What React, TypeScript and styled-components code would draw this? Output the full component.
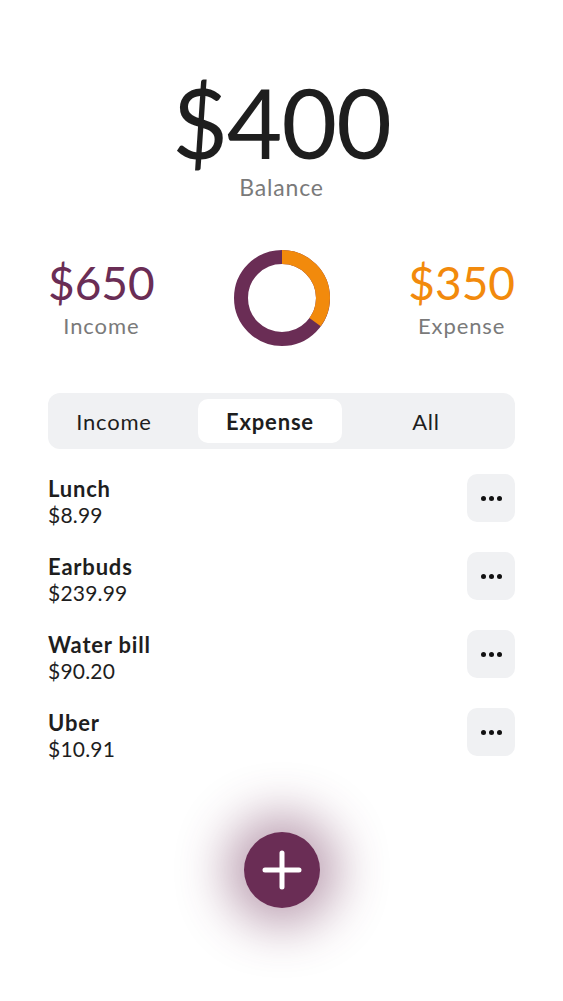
import React from "react";
import styled, { createGlobalStyle } from "styled-components";

const PURPLE = "#6a2d55";
const ORANGE = "#f28a0c";
const GRAY = "#7a7a7a";
const DARK = "#1e1e1e";
const LIGHT = "#f0f1f3";

const Global = createGlobalStyle`
  html, body { margin: 0; padding: 0; background: #fff; }
  body { font-family: Lato, "Open Sans", sans-serif; color: ${DARK}; }
  * { box-sizing: border-box; }
`;

const Page = styled.div`
  width: 563px;
  min-height: 1001px;
  padding: 74px 48px 0;
  display: flex;
  flex-direction: column;
`;

const BalanceBlock = styled.div`
  display: flex;
  flex-direction: column;
  align-items: center;
`;

const BigAmount = styled.div`
  font-size: 96px;
  line-height: 96px;
  font-weight: 400;
  color: ${DARK};
  letter-spacing: -1px;
`;

const Caption = styled.div`
  margin-top: 4px;
  font-size: 23px;
  line-height: 26px;
  color: ${GRAY};
  letter-spacing: 0.8px;
`;

const SummaryRow = styled.div`
  margin-top: 49px;
  display: grid;
  grid-template-columns: 1fr auto 1fr;
  align-items: center;
`;

const Stat = styled.div<{ $align: "start" | "end" }>`
  display: flex;
  flex-direction: column;
  align-items: center;
  justify-self: ${(p) => p.$align};
`;

const StatAmount = styled.div<{ $color: string }>`
  font-size: 46px;
  line-height: 52px;
  color: ${(p) => p.$color};
`;

const StatLabel = styled.div`
  font-size: 22px;
  line-height: 26px;
  color: ${GRAY};
  margin-top: 4px;
  letter-spacing: 0.9px;
`;

const Tabs = styled.div`
  margin-top: 46px;
  height: 56px;
  background: ${LIGHT};
  border-radius: 12px;
  padding: 6px;
  display: grid;
  grid-template-columns: 120px 144px 120px;
  column-gap: 24px;
`;

const Tab = styled.div<{ $active?: boolean }>`
  display: flex;
  align-items: center;
  justify-content: center;
  border-radius: 10px;
  font-size: 22px;
  font-weight: ${(p) => (p.$active ? 700 : 400)};
  background: ${(p) => (p.$active ? "#fff" : "transparent")};
  color: ${DARK};
  letter-spacing: 0.8px;
`;

const List = styled.div`
  margin-top: 25px;
  display: flex;
  flex-direction: column;
  gap: 30px;
`;

const Item = styled.div`
  display: flex;
  align-items: center;
  justify-content: space-between;
  height: 48px;
`;

const ItemText = styled.div`
  display: flex;
  flex-direction: column;
  margin-top: 6px;
`;

const ItemName = styled.div`
  font-size: 22px;
  line-height: 27px;
  font-weight: 700;
  letter-spacing: 0.8px;
`;

const ItemPrice = styled.div`
  font-size: 21px;
  line-height: 26px;
  letter-spacing: 0.2px;
`;

const MoreButton = styled.div`
  width: 48px;
  height: 48px;
  border-radius: 10px;
  background: ${LIGHT};
  display: flex;
  align-items: center;
  justify-content: center;
  gap: 3px;
`;

const Dot = styled.span`
  width: 5px;
  height: 5px;
  border-radius: 50%;
  background: #111;
`;

const FabWrap = styled.div`
  margin-top: 76px;
  display: flex;
  justify-content: center;
`;

const Fab = styled.div`
  width: 76px;
  height: 76px;
  border-radius: 50%;
  background: ${PURPLE};
  box-shadow: 0 0 50px 18px rgba(106, 45, 85, 0.45);
  display: flex;
  align-items: center;
  justify-content: center;
`;

const Donut = ({ ratio }: { ratio: number }) => {
  const r = 41;
  const c = 2 * Math.PI * r;
  return (
    <svg width="98" height="98" viewBox="0 0 98 98">
      <circle cx="49" cy="49" r={r} fill="none" stroke={PURPLE} strokeWidth="14" />
      <circle
        cx="49"
        cy="49"
        r={r}
        fill="none"
        stroke={ORANGE}
        strokeWidth="14"
        strokeDasharray={`${c * ratio} ${c}`}
        transform="rotate(-90 49 49)"
      />
    </svg>
  );
};

const items = [
  { name: "Lunch", price: "$8.99" },
  { name: "Earbuds", price: "$239.99" },
  { name: "Water bill", price: "$90.20" },
  { name: "Uber", price: "$10.91" },
];

export default function App() {
  return (
    <>
      <Global />
      <Page>
        <BalanceBlock>
          <BigAmount>$400</BigAmount>
          <Caption>Balance</Caption>
        </BalanceBlock>
        <SummaryRow>
          <Stat $align="start">
            <StatAmount $color={PURPLE}>$650</StatAmount>
            <StatLabel>Income</StatLabel>
          </Stat>
          <Donut ratio={0.35} />
          <Stat $align="end">
            <StatAmount $color={ORANGE}>$350</StatAmount>
            <StatLabel>Expense</StatLabel>
          </Stat>
        </SummaryRow>
        <Tabs>
          <Tab>Income</Tab>
          <Tab $active>Expense</Tab>
          <Tab>All</Tab>
        </Tabs>
        <List>
          {items.map((it) => (
            <Item key={it.name}>
              <ItemText>
                <ItemName>{it.name}</ItemName>
                <ItemPrice>{it.price}</ItemPrice>
              </ItemText>
              <MoreButton>
                <Dot />
                <Dot />
                <Dot />
              </MoreButton>
            </Item>
          ))}
        </List>
        <FabWrap>
          <Fab>
            <svg width="40" height="40" viewBox="0 0 40 40">
              <path d="M20 3 V37 M3 20 H37" stroke="#fff" strokeWidth="5" strokeLinecap="round" />
            </svg>
          </Fab>
        </FabWrap>
      </Page>
    </>
  );
}
